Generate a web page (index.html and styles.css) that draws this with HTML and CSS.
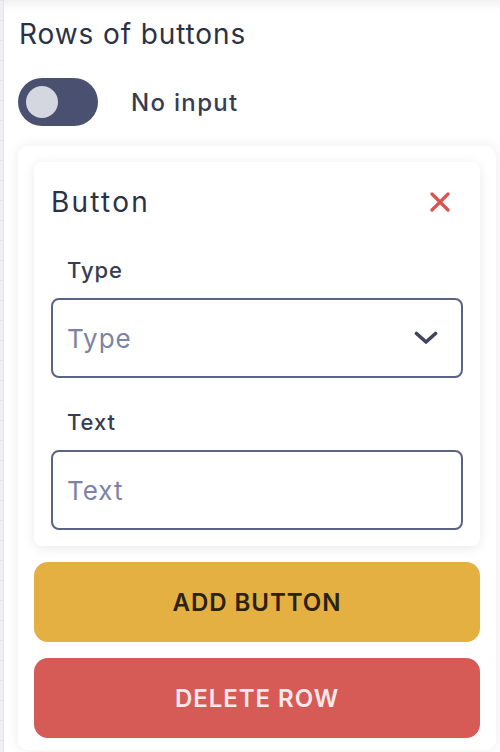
FILE: index.html
```html
<!DOCTYPE html>
<html lang="en">
<head>
<meta charset="utf-8">
<title>Rows of buttons</title>
<link rel="stylesheet" href="styles.css">
</head>
<body>
<div class="panel">
  <h2 class="title">Rows of buttons</h2>
  <div class="toggle-row">
    <span class="toggle"><span class="knob"></span></span>
    <span class="toggle-label">No input</span>
  </div>
  <div class="row-card">
    <div class="btn-card">
      <div class="btn-card-head">
        <span class="btn-card-title">Button</span>
        <span class="close" aria-label="Remove">
          <svg width="20" height="20" viewBox="0 0 20 20"><path d="M2 2 L18 18 M18 2 L2 18" stroke="#d9534f" stroke-width="3.2" stroke-linecap="round" fill="none"/></svg>
        </span>
      </div>
      <div class="field">
        <span class="field-label">Type</span>
        <div class="control select">
          <span class="placeholder">Type</span>
          <svg class="chevron" width="24" height="14" viewBox="0 0 24 14"><path d="M2.5 2.5 L12 11 L21.5 2.5" stroke="#3e4560" stroke-width="3.6" stroke-linecap="round" stroke-linejoin="round" fill="none"/></svg>
        </div>
      </div>
      <div class="field">
        <span class="field-label">Text</span>
        <div class="control">
          <span class="placeholder">Text</span>
        </div>
      </div>
    </div>
    <button class="action add">ADD BUTTON</button>
    <button class="action delete">DELETE ROW</button>
  </div>
</div>
</body>
</html>
```

FILE: styles.css
```css
html, body {
  margin: 0;
  padding: 0;
}

body {
  background-color: #eef0f4;
  background-image: linear-gradient(#e2e5ec 1px, transparent 1px);
  background-size: 100% 20px;
  font-family: Inter, "Open Sans", sans-serif;
  letter-spacing: 0.06em;
}

.panel {
  margin-left: 3px;
  min-height: 752px;
  box-sizing: border-box;
  background: #fff;
  border-left: 1px solid #e4e6ec;
  padding: 14px 4px 0 14px;
  box-shadow: inset 0 12px 12px -10px rgba(0, 0, 0, 0.09);
}

.title {
  margin: 0;
  font-size: 28px;
  font-weight: 400;
  line-height: 40px;
  letter-spacing: 0.032em;
  color: #2b3245;
  padding-left: 1px;
}

.toggle-row {
  display: flex;
  align-items: center;
  margin-top: 24px;
  height: 48px;
}

.toggle {
  width: 80px;
  height: 48px;
  border-radius: 24px;
  background: #4a5170;
  display: flex;
  align-items: center;
  padding-left: 8px;
  box-sizing: border-box;
}

.knob {
  width: 32px;
  height: 32px;
  border-radius: 50%;
  background: #d4d6e0;
}

.toggle-label {
  margin-left: 33px;
  font-size: 24px;
  font-weight: 500;
  letter-spacing: 0.055em;
  color: #363c52;
}

.row-card {
  margin-top: 20px;
  background: #fff;
  border-radius: 10px;
  box-shadow: 0 0 14px rgba(0, 0, 0, 0.08);
  padding: 16px 16px 12px;
  display: flex;
  flex-direction: column;
  gap: 16px;
}

.btn-card {
  background: #fff;
  border-radius: 8px;
  box-shadow: 0 2px 12px rgba(0, 0, 0, 0.09);
  padding: 16px 17px;
}

.btn-card-head {
  display: flex;
  justify-content: space-between;
  align-items: center;
  height: 48px;
}

.btn-card-title {
  font-size: 28px;
  letter-spacing: 0.08em;
  color: #2b3245;
}

.close {
  display: flex;
  margin-right: 13px;
}

.field {
  margin-top: 28px;
}

.field-label {
  display: block;
  padding-left: 16px;
  font-size: 22px;
  font-weight: 500;
  line-height: 32px;
  color: #363c52;
  margin-bottom: 12px;
}

.control {
  height: 80px;
  border: 2px solid #5b6384;
  border-radius: 8px;
  box-sizing: border-box;
  display: flex;
  align-items: center;
  padding: 0 23px 0 14px;
  font-size: 26px;
  color: #7b83a8;
}

.select {
  justify-content: space-between;
}

.action {
  display: block;
  width: 100%;
  height: 80px;
  border: none;
  border-radius: 14px;
  font-family: inherit;
  font-size: 24px;
  font-weight: 600;
  letter-spacing: 0.04em;
  cursor: pointer;
}

.add {
  background: #e3b041;
  color: #2a220e;
}

.delete {
  background: #d65a55;
  color: #fbe9ea;
}
```
